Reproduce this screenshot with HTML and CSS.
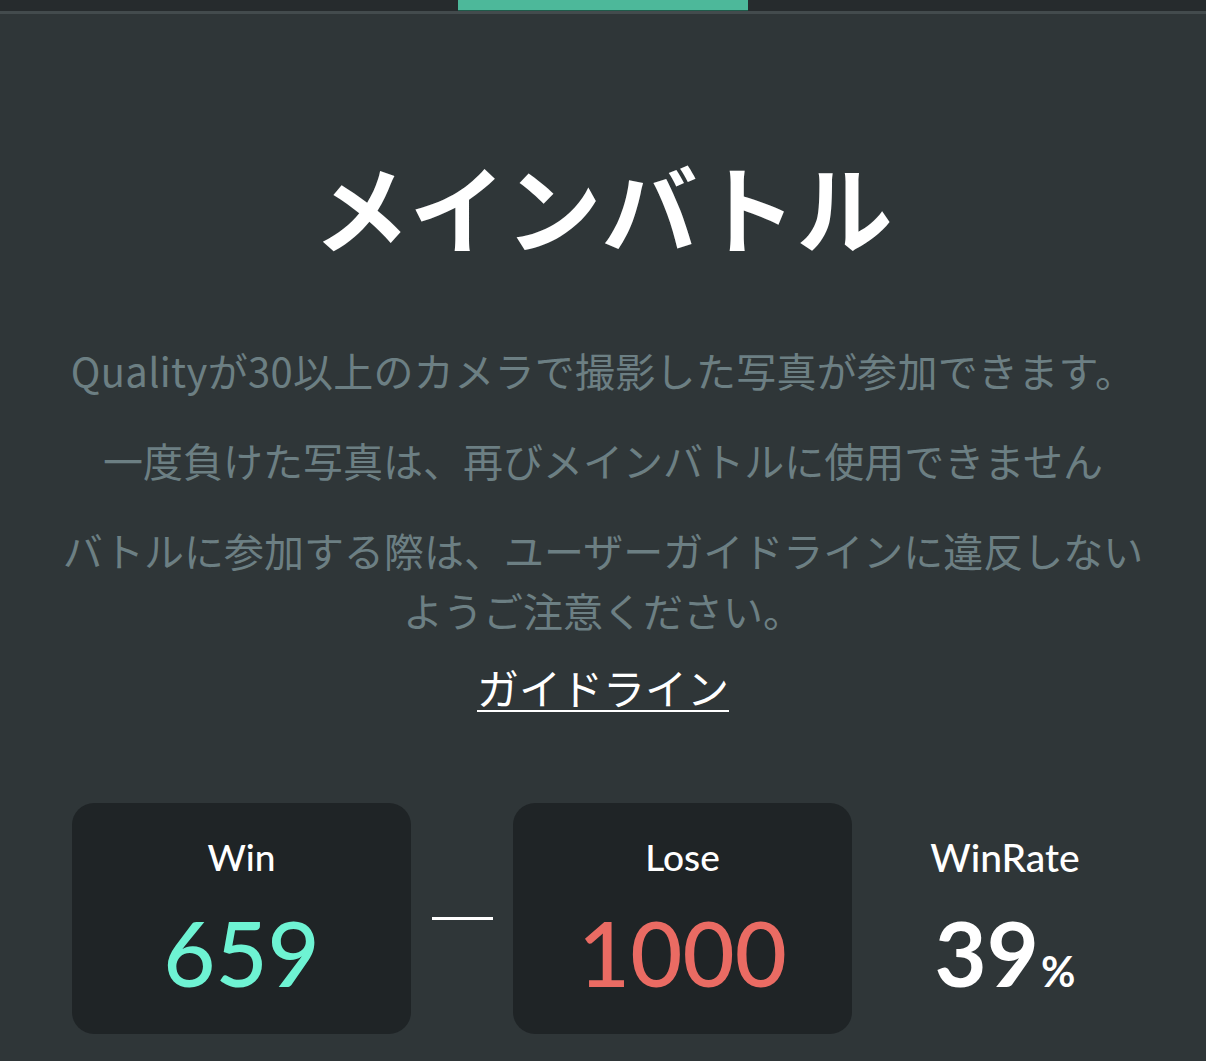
FILE: index.html
```html
<!DOCTYPE html>
<html lang="ja">
<head>
<meta charset="utf-8">
<title>メインバトル</title>
<link rel="stylesheet" href="styles.css">
</head>
<body>
<div class="tabbar">
  <div class="tab"></div>
  <div class="tab active"></div>
  <div class="tab"></div>
</div>
<main class="main">
  <h1 class="title">メインバトル</h1>
  <p class="desc">Qualityが30以上のカメラで撮影した写真が参加できます。</p>
  <p class="desc">一度負けた写真は、再びメインバトルに使用できません</p>
  <p class="desc">バトルに参加する際は、ユーザーガイドラインに違反しないようご注意ください。</p>
  <a class="guide" href="#">ガイドライン</a>
  <section class="stats">
    <div class="card">
      <div class="label">Win</div>
      <div class="num win">659</div>
    </div>
    <div class="dash"><span></span></div>
    <div class="card">
      <div class="label">Lose</div>
      <div class="num lose">1000</div>
    </div>
    <div class="rate">
      <div class="label">WinRate</div>
      <div class="num pct">39<span class="unit">%</span></div>
    </div>
  </section>
</main>
</body>
</html>
```

FILE: styles.css
```css
html, body {
  margin: 0;
  padding: 0;
  background: #2f3638;
}
body {
  font-family: "Noto Sans CJK JP", "Noto Sans", sans-serif;
  color: #ffffff;
  width: 1206px;
  height: 1061px;
  overflow: hidden;
}
.tabbar {
  display: grid;
  grid-template-columns: 458px 290px 1fr;
  height: 11px;
  background: #262b2d;
  border-bottom: 3px solid #434b4d;
}
.tab.active {
  background: #4db89a;
  box-shadow: inset 0 -1px 0 #1f5a4a;
}
.main {
  display: flex;
  flex-direction: column;
  align-items: center;
  padding: 133px 48px 0;
}
.title {
  margin: 0;
  font-size: 96px;
  line-height: 115px;
  font-weight: 700;
  letter-spacing: 0;
}
.desc {
  margin: 30px 0 0;
  font-size: 40px;
  line-height: 60px;
  font-weight: 400;
  color: #6c7f83;
  text-align: center;
}
.title + .desc {
  margin-top: 78px;
}
.desc:first-of-type {
  letter-spacing: 0.3px;
}
.guide {
  margin-top: 17px;
  font-size: 42px;
  line-height: 60px;
  font-weight: 400;
  color: #ffffff;
  text-decoration: underline;
  text-decoration-thickness: 2px;
  text-underline-offset: 5px;
}
.stats {
  align-self: stretch;
  margin: 86px 0 0 24px;
  display: grid;
  grid-template-columns: 339px 102px 339px 1fr;
  align-items: stretch;
}
.card {
  background: #1f2426;
  border-radius: 22px;
  height: 231px;
  box-sizing: border-box;
  padding-top: 34px;
  display: flex;
  flex-direction: column;
  align-items: center;
}
.label {
  font-family: "Lato", "Noto Sans", sans-serif;
  font-size: 37px;
  line-height: 40px;
  font-weight: 500;
  color: #ffffff;
}
.rate .label {
  font-size: 39px;
}
.num {
  margin-top: 25px;
  font-family: "Lato", "Noto Sans", sans-serif;
  font-size: 90px;
  line-height: 100px;
  font-weight: 500;
}
.win { color: #6ef3d3; }
.lose { color: #ea6b63; }
.dash {
  display: flex;
  align-items: center;
  justify-content: center;
}
.dash span {
  display: block;
  width: 61px;
  height: 3px;
  background: #ffffff;
}
.rate {
  padding-top: 34px;
  display: flex;
  flex-direction: column;
  align-items: center;
}
.pct {
  font-weight: 700;
  color: #ffffff;
}
.unit {
  font-size: 42px;
  font-weight: 700;
  margin-left: 2px;
}
```
